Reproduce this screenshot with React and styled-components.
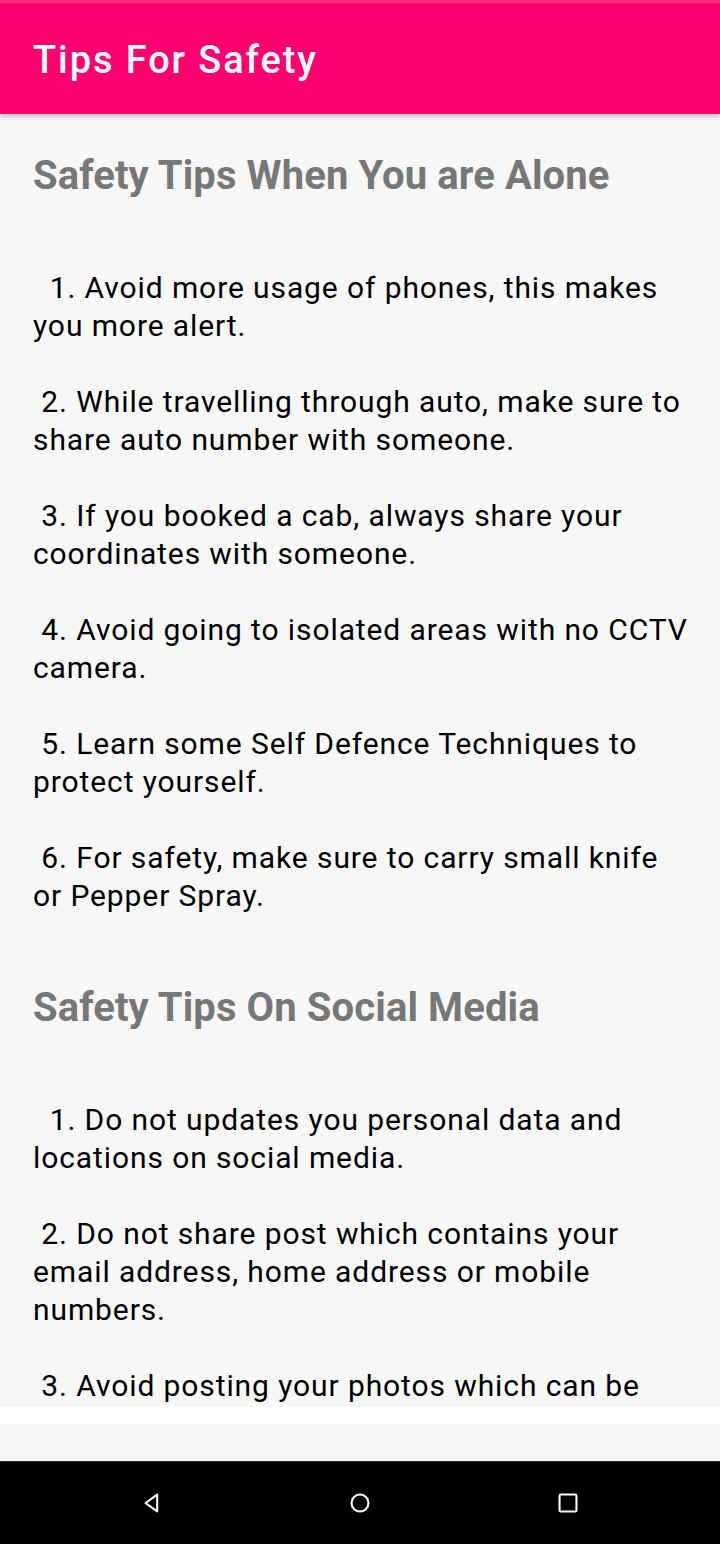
import React from 'react'
import styled, { createGlobalStyle } from 'styled-components'

const GlobalStyle = createGlobalStyle`
  html, body {
    margin: 0;
    padding: 0;
    background: #f7f7f7;
    font-family: Roboto, "Noto Sans", sans-serif;
  }
`

const sections = [
  {
    title: 'Safety Tips When You are Alone',
    body: `  1. Avoid more usage of phones, this makes you more alert.

 2. While travelling through auto, make sure to share auto number with someone.

 3. If you booked a cab, always share your coordinates with someone.

 4. Avoid going to isolated areas with no CCTV camera.

 5. Learn some Self Defence Techniques to protect yourself.

 6. For safety, make sure to carry small knife or Pepper Spray.`,
  },
  {
    title: 'Safety Tips On Social Media',
    body: `  1. Do not updates you personal data and locations on social media.

 2. Do not share post which contains your email address, home address or mobile numbers.

 3. Avoid posting your photos which can be misused by others.

 4. Keep your account private.`,
  },
]

export default function App() {
  return (
    <Screen>
      <GlobalStyle />
      <AppBar>
        <StatusStrip />
        <Title>Tips For Safety</Title>
      </AppBar>
      <Scroller>
        {sections.map((s, i) => (
          <Section key={i} first={i === 0}>
            <Heading>{s.title}</Heading>
            <Body>{s.body}</Body>
          </Section>
        ))}
      </Scroller>
      <Gap />
      <Filler />
      <NavBar>
        <NavIcon viewBox="0 0 20 20">
          <path d="M14 3.5 L5 10 L14 16.5 Z" fill="none" stroke="#fff" strokeWidth="1.6" strokeLinejoin="round" />
        </NavIcon>
        <NavIcon viewBox="0 0 20 20">
          <circle cx="10" cy="10" r="6.5" fill="none" stroke="#fff" strokeWidth="1.6" />
        </NavIcon>
        <NavIcon viewBox="0 0 20 20">
          <rect x="3.5" y="3.5" width="13" height="13" rx="1" fill="none" stroke="#fff" strokeWidth="1.6" />
        </NavIcon>
      </NavBar>
    </Screen>
  )
}

const Screen = styled.div`
  width: 720px;
  height: 1544px;
  display: flex;
  flex-direction: column;
  background: #f7f7f7;
  overflow: hidden;
`

const AppBar = styled.header`
  position: relative;
  z-index: 1;
  height: 114px;
  flex: none;
  background: #ff0070;
  box-shadow: 0 2px 5px rgba(0, 0, 0, 0.25);
  display: flex;
  flex-direction: column;
`

const StatusStrip = styled.div`
  height: 3px;
  background: #ff2a84;
`

const Title = styled.h1`
  margin: 0;
  flex: 1;
  display: flex;
  align-items: center;
  padding: 2px 33px 0;
  color: #fff;
  font-size: 38px;
  font-weight: 500;
  letter-spacing: 1.9px;
`

const Scroller = styled.main`
  height: 1293px;
  flex: none;
  overflow: hidden;
  padding: 0 26px 0 33px;
`

const Section = styled.section`
  display: flex;
  flex-direction: column;
  margin-top: ${p => (p.first ? '38px' : '69px')};
`

const Heading = styled.h2`
  margin: 0;
  font-size: 40px;
  line-height: 48px;
  font-weight: 700;
  letter-spacing: 0.1px;
  color: #777;
`

const Body = styled.p`
  margin: 69px 0 0;
  white-space: pre-wrap;
  font-size: 30px;
  line-height: 38px;
  letter-spacing: 0.9px;
  color: #000;
`

const Gap = styled.div`
  height: 17px;
  flex: none;
  background: #fff;
`

const Filler = styled.div`
  flex: 1;
  background: #f7f7f7;
`

const NavBar = styled.nav`
  height: 82px;
  flex: none;
  background: #000;
  border-top: 1px solid #333;
  display: flex;
  justify-content: space-around;
  align-items: center;
  padding: 0 48px;
`

const NavIcon = styled.svg`
  width: 26px;
  height: 26px;
`
